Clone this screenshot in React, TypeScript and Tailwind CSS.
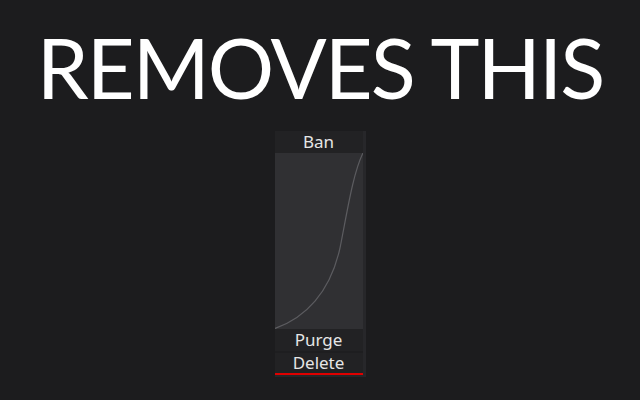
import React from "react";

export default function App() {
  return (
    <div
      className="w-[640px] h-[400px] bg-[#1c1c1e] flex flex-col items-center overflow-hidden"
      style={{ fontFamily: '"Noto Sans", "Open Sans", sans-serif' }}
    >
      <div
        className="mt-[26px] text-[83px] leading-none text-white tracking-[-2px]"
        style={{ fontFamily: 'Lato, "Noto Sans", sans-serif' }}
      >
        REMOVES THIS
      </div>
      <div className="mt-[22px] w-[91px] h-[246px] bg-[#27272a] flex flex-col pr-[3px]">
        <div className="h-[22px] bg-[#222224] flex items-center justify-center text-[17px] text-[#e6e6e6]">
          Ban
        </div>
        <div className="h-[176px] bg-[#303033]">
          <svg width="88" height="176" viewBox="0 0 88 176" className="block">
            <path
              d="M0 175.5 C30 165 55 140 65 95 C72 60 78 20 88 0"
              fill="none"
              stroke="#5c5c60"
              strokeWidth="1.2"
            />
          </svg>
        </div>
        <div className="h-[22px] bg-[#222224] flex items-center justify-center text-[17px] text-[#e6e6e6]">
          Purge
        </div>
        <div className="h-[2px] bg-[#1e1e20]" />
        <div className="h-[22px] bg-[#222224] border-b-2 border-[#e00000] flex items-center justify-center text-[17px] text-[#e6e6e6]">
          Delete
        </div>
      </div>
    </div>
  );
}
